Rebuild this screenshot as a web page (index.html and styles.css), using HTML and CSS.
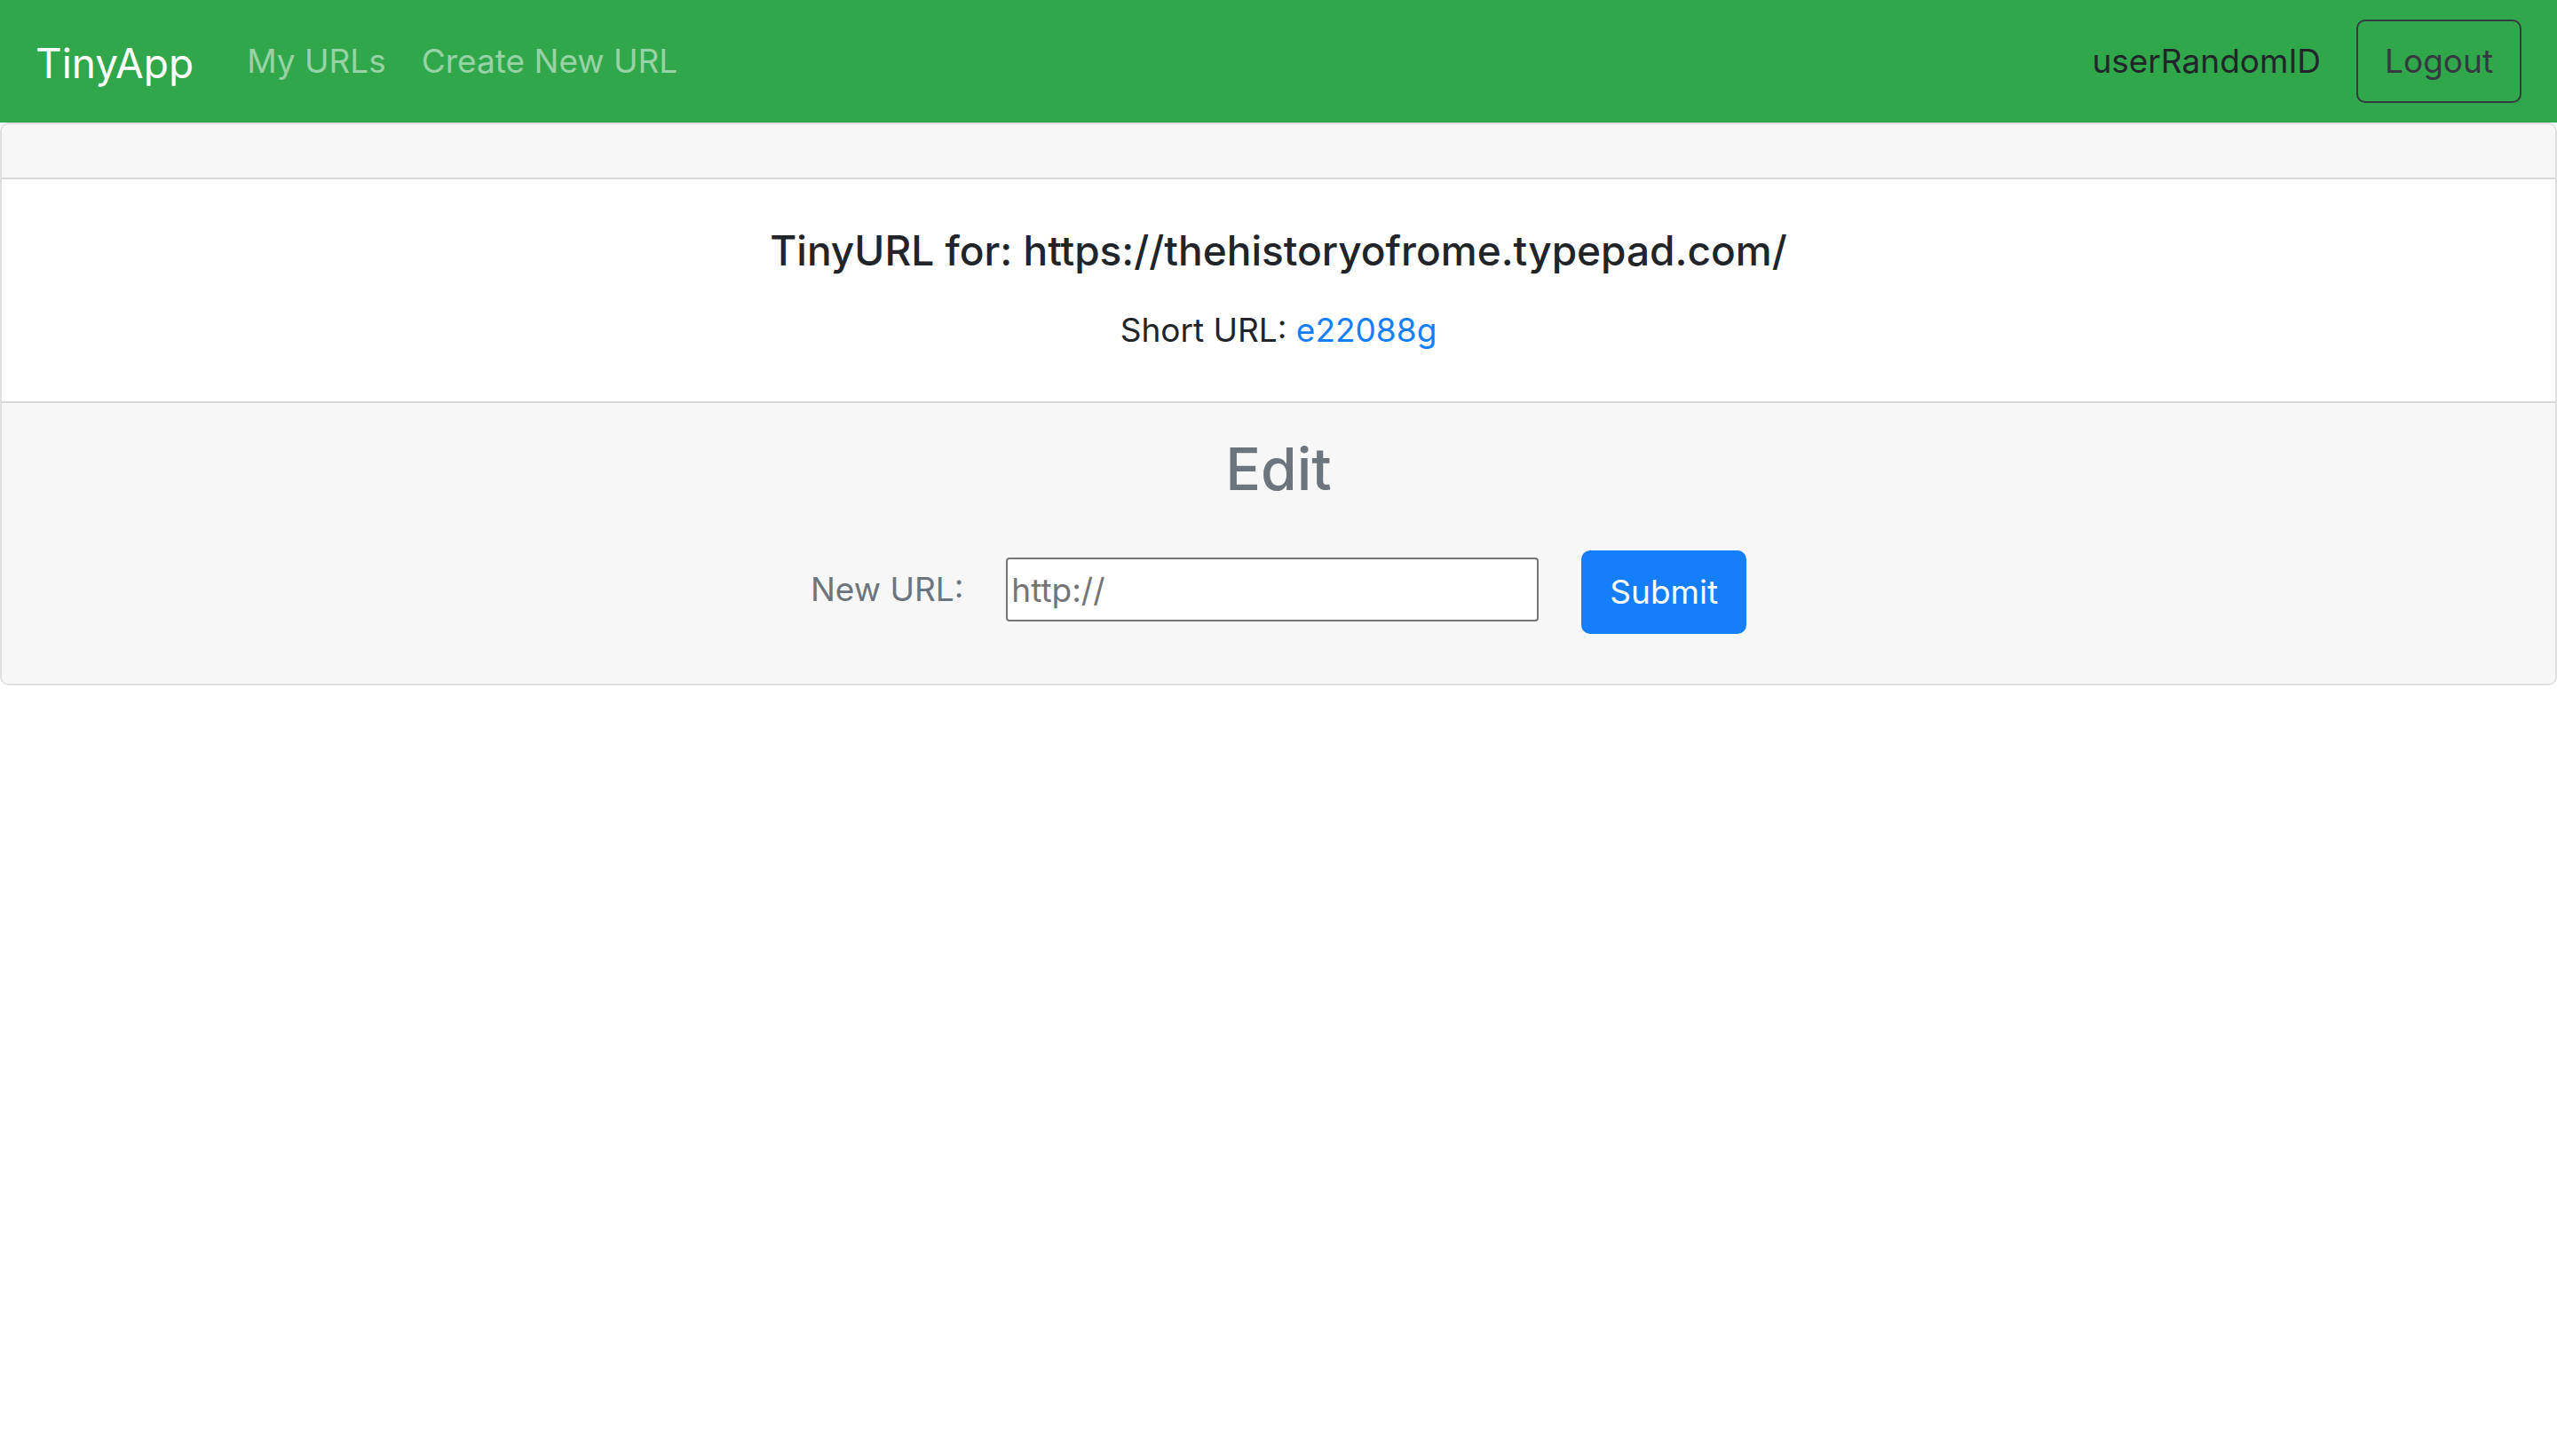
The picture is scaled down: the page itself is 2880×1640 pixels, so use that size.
FILE: index.html
```html
<!DOCTYPE html>
<html lang="en">
<head>
<meta charset="utf-8">
<title>TinyApp</title>
<link rel="stylesheet" href="styles.css">
</head>
<body>
<header class="navbar">
  <a class="brand" href="#">TinyApp</a>
  <nav class="nav-links">
    <a class="nav-link" href="#">My URLs</a>
    <a class="nav-link" href="#">Create New URL</a>
  </nav>
  <form class="account">
    <span class="user">userRandomID</span>
    <button class="btn btn-outline" type="submit">Logout</button>
  </form>
</header>
<main class="card">
  <div class="card-header"></div>
  <section class="card-body">
    <h5 class="card-title">TinyURL for: https://thehistoryofrome.typepad.com/</h5>
    <p class="card-text">Short URL: <a class="short-link" href="#">e22088g</a></p>
  </section>
  <section class="card-footer">
    <h3 class="edit-title">Edit</h3>
    <form class="edit-form">
      <div class="edit-field">
        <label class="edit-label" for="new-url">New URL:</label>
        <input class="edit-input" id="new-url" type="text" placeholder="http://">
      </div>
      <button class="btn btn-primary" type="submit">Submit</button>
    </form>
  </section>
</main>
</body>
</html>
```
FILE: styles.css
```css
* {
  box-sizing: border-box;
}

body {
  margin: 0;
  background: #fff;
  color: #212529;
  font-family: Inter, "Liberation Sans", sans-serif;
  font-size: 37px;
  line-height: 60px;
}

a {
  text-decoration: none;
}

.navbar {
  display: flex;
  align-items: center;
  padding: 22px 40px;
  background: #30a74a;
}

.brand {
  margin-right: 60px;
  padding-top: 4px;
  color: #fff;
  font-size: 46px;
}

.nav-links {
  display: flex;
  gap: 40px;
}

.nav-link {
  color: rgba(255, 255, 255, 0.5);
}

.account {
  display: flex;
  align-items: center;
  gap: 40px;
  margin-left: auto;
}

.btn {
  padding: 15px 30px;
  border: 2px solid transparent;
  border-radius: 10px;
  font: inherit;
}

.btn-outline {
  border-color: #343a40;
  background: transparent;
  color: #343a40;
}

.btn-primary {
  border-color: #147efb;
  background: #147efb;
  color: #fff;
}

.card {
  border: 2px solid #dfdfdf;
  border-radius: 10px;
  overflow: hidden;
  text-align: center;
}

.card-header {
  height: 62px;
  border-bottom: 2px solid #d7d7d7;
  background: #f7f7f7;
}

.card-body {
  padding: 50px;
}

.card-title {
  margin: 0 0 30px;
  font-size: 46px;
  font-weight: 500;
}

.card-text {
  margin: 0;
}

.short-link {
  color: #147efb;
}

.card-footer {
  padding: 32px 50px 56px;
  border-top: 2px solid #d7d7d7;
  background: #f7f7f7;
  color: #6c757d;
}

.edit-title {
  margin: 0 0 50px;
  font-size: 66px;
  font-weight: 500;
  line-height: 84px;
}

.edit-form {
  display: flex;
  justify-content: center;
  align-items: center;
  gap: 48px;
}

.edit-field {
  display: flex;
  align-items: center;
  gap: 48px;
  padding-bottom: 6px;
}

.edit-input {
  width: 600px;
  height: 72px;
  padding: 2px 4px;
  border: 2px solid #767676;
  border-radius: 4px;
  background: #fff;
  font: inherit;
}

.edit-input::placeholder {
  color: #757575;
}
```
